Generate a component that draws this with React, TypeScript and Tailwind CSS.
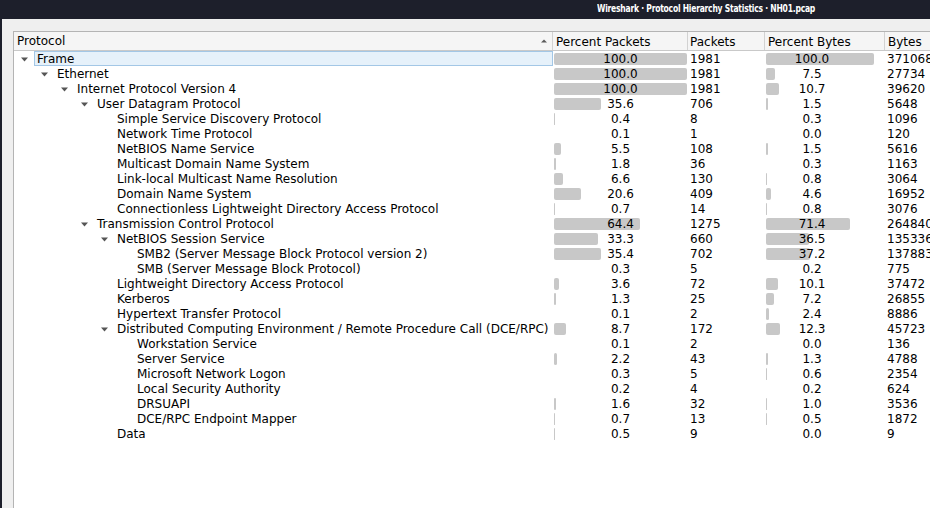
import React from "react";

type Row = {
  name: string;
  level: number;
  open?: boolean;
  pp: number;
  pk: number;
  pb: number;
  bytes: number;
};

const rows: Row[] = [
  { name: "Frame", level: 0, open: true, pp: 100, pk: 1981, pb: 100, bytes: 371068 },
  { name: "Ethernet", level: 1, open: true, pp: 100, pk: 1981, pb: 7.5, bytes: 27734 },
  { name: "Internet Protocol Version 4", level: 2, open: true, pp: 100, pk: 1981, pb: 10.7, bytes: 39620 },
  { name: "User Datagram Protocol", level: 3, open: true, pp: 35.6, pk: 706, pb: 1.5, bytes: 5648 },
  { name: "Simple Service Discovery Protocol", level: 4, pp: 0.4, pk: 8, pb: 0.3, bytes: 1096 },
  { name: "Network Time Protocol", level: 4, pp: 0.1, pk: 1, pb: 0.0, bytes: 120 },
  { name: "NetBIOS Name Service", level: 4, pp: 5.5, pk: 108, pb: 1.5, bytes: 5616 },
  { name: "Multicast Domain Name System", level: 4, pp: 1.8, pk: 36, pb: 0.3, bytes: 1163 },
  { name: "Link-local Multicast Name Resolution", level: 4, pp: 6.6, pk: 130, pb: 0.8, bytes: 3064 },
  { name: "Domain Name System", level: 4, pp: 20.6, pk: 409, pb: 4.6, bytes: 16952 },
  { name: "Connectionless Lightweight Directory Access Protocol", level: 4, pp: 0.7, pk: 14, pb: 0.8, bytes: 3076 },
  { name: "Transmission Control Protocol", level: 3, open: true, pp: 64.4, pk: 1275, pb: 71.4, bytes: 264840 },
  { name: "NetBIOS Session Service", level: 4, open: true, pp: 33.3, pk: 660, pb: 36.5, bytes: 135336 },
  { name: "SMB2 (Server Message Block Protocol version 2)", level: 5, pp: 35.4, pk: 702, pb: 37.2, bytes: 137883 },
  { name: "SMB (Server Message Block Protocol)", level: 5, pp: 0.3, pk: 5, pb: 0.2, bytes: 775 },
  { name: "Lightweight Directory Access Protocol", level: 4, pp: 3.6, pk: 72, pb: 10.1, bytes: 37472 },
  { name: "Kerberos", level: 4, pp: 1.3, pk: 25, pb: 7.2, bytes: 26855 },
  { name: "Hypertext Transfer Protocol", level: 4, pp: 0.1, pk: 2, pb: 2.4, bytes: 8886 },
  { name: "Distributed Computing Environment / Remote Procedure Call (DCE/RPC)", level: 4, open: true, pp: 8.7, pk: 172, pb: 12.3, bytes: 45723 },
  { name: "Workstation Service", level: 5, pp: 0.1, pk: 2, pb: 0.0, bytes: 136 },
  { name: "Server Service", level: 5, pp: 2.2, pk: 43, pb: 1.3, bytes: 4788 },
  { name: "Microsoft Network Logon", level: 5, pp: 0.3, pk: 5, pb: 0.6, bytes: 2354 },
  { name: "Local Security Authority", level: 5, pp: 0.2, pk: 4, pb: 0.2, bytes: 624 },
  { name: "DRSUAPI", level: 5, pp: 1.6, pk: 32, pb: 1.0, bytes: 3536 },
  { name: "DCE/RPC Endpoint Mapper", level: 5, pp: 0.7, pk: 13, pb: 0.5, bytes: 1872 },
  { name: "Data", level: 4, pp: 0.5, pk: 9, pb: 0.0, bytes: 9 },
];

const Arrow = () => (
  <svg width="7" height="5" viewBox="0 0 7 5" className="fill-[#555555]">
    <polygon points="0,0.5 7,0.5 3.5,4.5" />
  </svg>
);

// bar width in px, nothing under half a pixel
const barWidth = (pct: number, full: number, max: number) =>
  Math.min(Math.round((pct / 100) * full), max);

const PercentCell = ({
  pct,
  full,
  max,
  className,
}: {
  pct: number;
  full: number;
  max: number;
  className: string;
}) => {
  const w = barWidth(pct, full, max);
  return (
    <div className={`relative h-full shrink-0 ${className}`}>
      {w > 0 && (
        <div
          className="absolute left-[1px] top-[2px] h-[12px] rounded-[2px] bg-[#c8c8c8]"
          style={{ width: w }}
        />
      )}
      <div className="relative text-center">{pct.toFixed(1)}</div>
    </div>
  );
};

export default function App() {
  return (
    <div className="w-[930px] h-[508px] overflow-hidden flex flex-col bg-[#efefef] font-['DejaVu_Sans',sans-serif] text-[12px] text-black">
      {/* title bar */}
      <div className="h-[19px] shrink-0 bg-[#1d1f2b] flex items-center pl-[597px]">
        <span className="inline-block origin-left scale-x-[0.77] whitespace-nowrap font-['DejaVu_Sans_Condensed','DejaVu_Sans',sans-serif] font-bold text-[11px] tracking-[-0.3px] text-white">
          Wireshark · Protocol Hierarchy Statistics · NH01.pcap
        </span>
      </div>

      <div className="flex-1 flex min-h-0">
        <div className="w-[2px] bg-[#1d1f2b] shrink-0" />
        <div className="flex-1 pl-[11px] pt-[12px] min-w-0">
          <div className="h-full bg-white border-l border-t border-[#b4b4b4] flex flex-col">
            {/* header */}
            <div className="h-[19px] shrink-0 flex bg-[#f5f5f5] border-b border-[#c9c9c9] leading-[20px] whitespace-nowrap">
              <div className="w-[539px] shrink-0 flex items-center border-r border-[#d2d2d2] pl-[3px] pr-[5px]">
                <span className="flex-1">Protocol</span>
                <svg width="6" height="4" viewBox="0 0 6 4" className="fill-[#5a5a5a]">
                  <polygon points="3,0.5 6,3.5 0,3.5" />
                </svg>
              </div>
              <div className="w-[135px] shrink-0 border-r border-[#d2d2d2] pl-[3px]">Percent Packets</div>
              <div className="w-[77px] shrink-0 border-r border-[#d2d2d2] pl-[2px]">Packets</div>
              <div className="w-[120px] shrink-0 border-r border-[#d2d2d2] pl-[3px]">Percent Bytes</div>
              <div className="w-[80px] shrink-0 pl-[3px]">Bytes</div>
            </div>

            {/* rows */}
            {rows.map((r, i) => (
              <div key={i} className="h-[15px] shrink-0 flex leading-[17px] whitespace-nowrap">
                <div className="w-[539px] shrink-0 flex h-full">
                  <div className="shrink-0" style={{ width: r.level * 20 }} />
                  <div className="w-[20px] shrink-0 flex items-center pl-[7px] pt-[1px]">
                    {r.open && <Arrow />}
                  </div>
                  <div
                    className={`flex-1 pl-[2px] border leading-[15px] ${
                      i === 0 ? "bg-[#e6f1fa] border-[#a3c7e6]" : "border-transparent"
                    }`}
                  >
                    {r.name}
                  </div>
                </div>
                <PercentCell pct={r.pp} full={133} max={133} className="w-[135px]" />
                <div className="w-[77px] shrink-0 pl-[2px]">{r.pk}</div>
                <PercentCell pct={r.pb} full={117} max={108} className="w-[120px] pr-[26px]" />
                <div className="w-[80px] shrink-0 pl-[2px]">{r.bytes}</div>
              </div>
            ))}
          </div>
        </div>
      </div>
    </div>
  );
}
